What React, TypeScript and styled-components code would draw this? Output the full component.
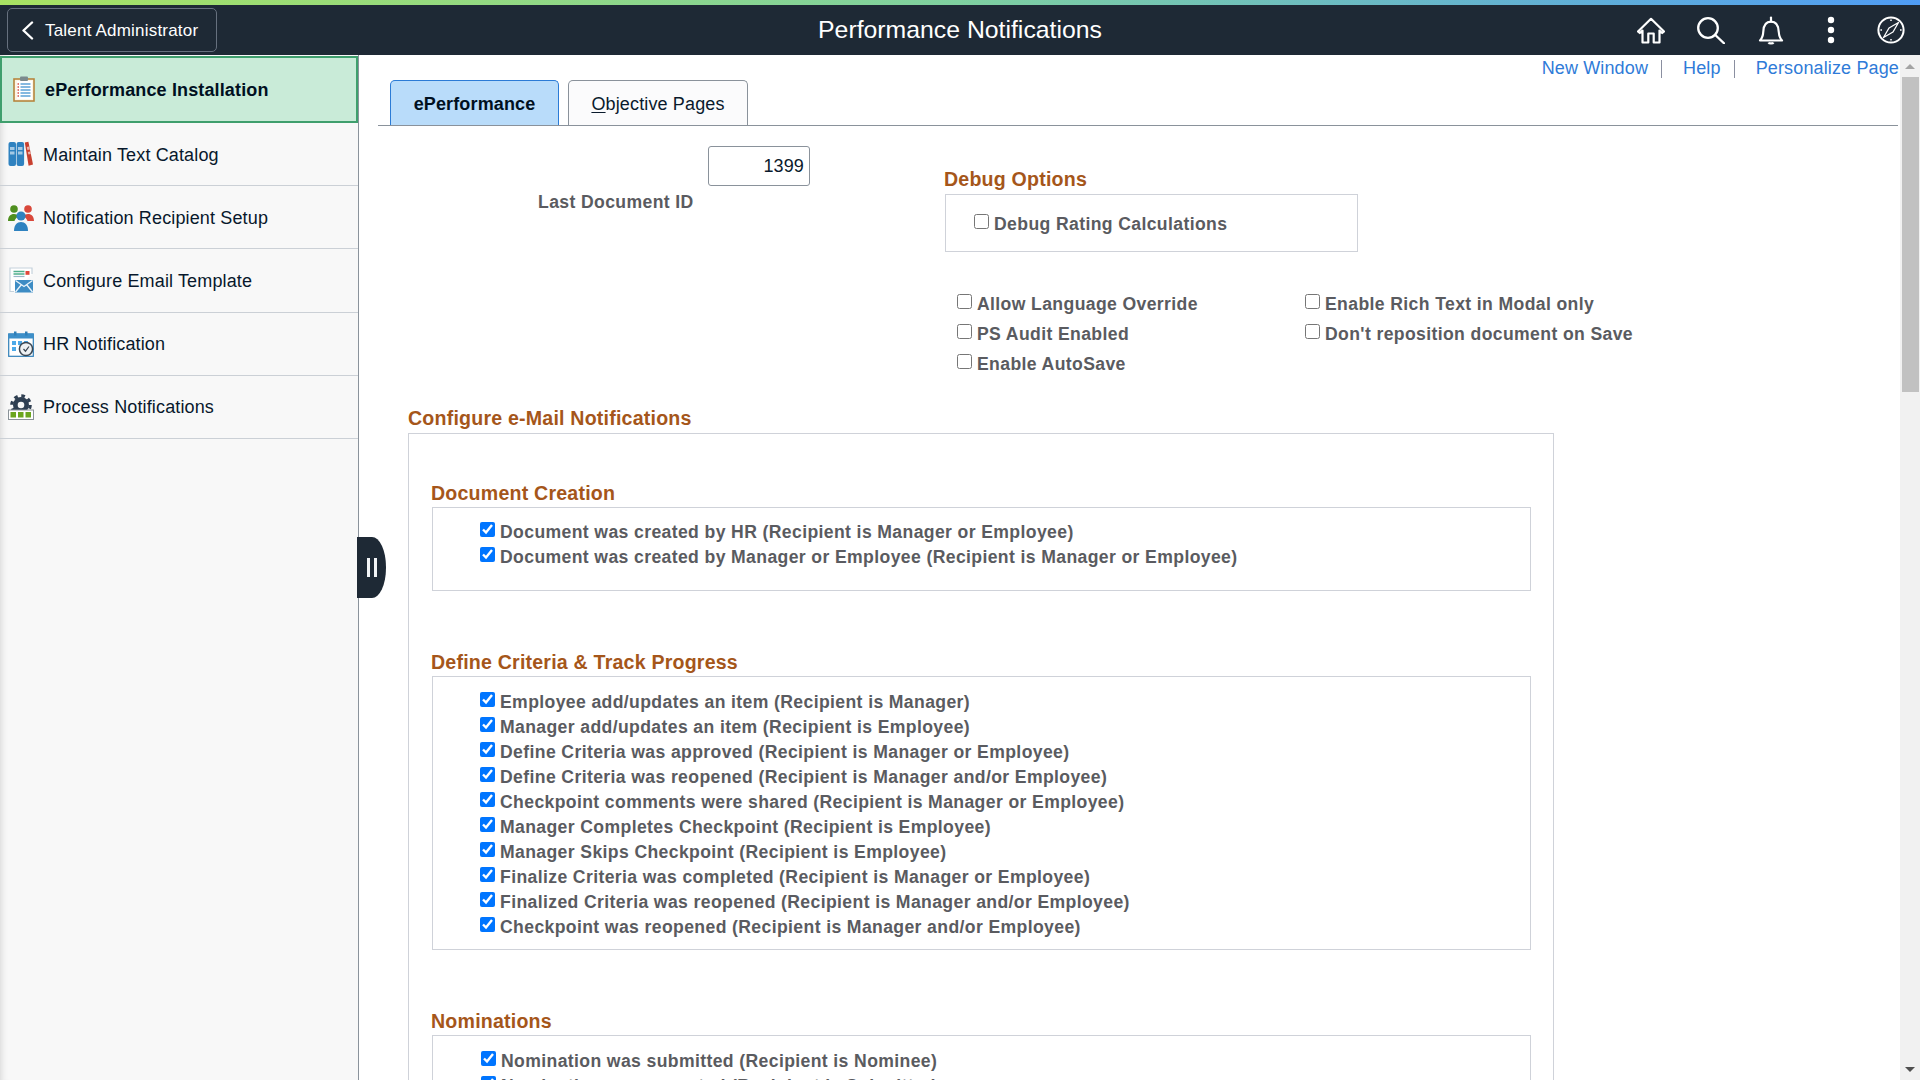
import React from 'react';
import styled, { createGlobalStyle } from 'styled-components';

const GlobalStyle = createGlobalStyle`
  html, body {
    margin: 0;
    height: 100%;
    overflow: hidden;
    background: #fff;
    font-family: "Liberation Sans", Arial, sans-serif;
  }
`;

const Page = styled.div`
  display: flex;
  flex-direction: column;
  height: 100vh;
  overflow: hidden;
`;

const Stripe = styled.div`
  height: 5px;
  flex-shrink: 0;
  background: linear-gradient(90deg, #a8e263 0%, #7fd0a0 50%, #4f9cf5 100%);
`;

const Banner = styled.header`
  display: grid;
  grid-template-columns: 1fr auto 1fr;
  align-items: center;
  height: 50px;
  flex-shrink: 0;
  background: #1e2935;
  color: #fff;
`;

const BackButton = styled.button`
  display: flex;
  align-items: center;
  justify-self: start;
  width: 210px;
  height: 44px;
  margin-left: 7px;
  padding: 2px 0 0 13px;
  gap: 11px;
  background: transparent;
  border: 1px solid #66707e;
  border-radius: 5px;
  color: #fff;
  font: 17px "Liberation Sans", Arial, sans-serif;
  letter-spacing: 0.2px;

  svg {
    margin-top: -2px;
  }
`;

const Title = styled.div`
  font-size: 24.8px;
`;

const BannerIcons = styled.div`
  display: flex;
  justify-self: end;
  align-items: center;
  gap: 32px;
  padding-right: 15px;
`;

const Body = styled.div`
  display: flex;
  flex: 1;
  min-height: 0;
  position: relative;
`;

const Sidebar = styled.nav`
  width: 358px;
  flex-shrink: 0;
  padding-top: 1px;
  background: #f8f8f8;
  border-right: 1px solid #8b939c;
  box-shadow: inset 9px 0 9px -9px rgba(0, 0, 0, 0.18);
`;

const NavItem = styled.div<{ $selected?: boolean }>`
  display: flex;
  align-items: center;
  box-sizing: border-box;
  height: ${(p) => (p.$selected ? '67px' : '63.2px')};
  padding: ${(p) => (p.$selected ? '2px 0 0 9px' : '2px 0 0 8px')};
  gap: ${(p) => (p.$selected ? '8px' : '9px')};
  font-size: 18px;
  letter-spacing: 0.14px;
  font-weight: ${(p) => (p.$selected ? 700 : 400)};
  color: ${(p) => (p.$selected ? '#00101f' : '#08182c')};
  background: ${(p) => (p.$selected ? '#c9ebd8' : 'transparent')};
  border: ${(p) => (p.$selected ? '2px solid #3f9f6d' : 'none')};
  border-bottom: ${(p) =>
    p.$selected ? '2px solid #3f9f6d' : '1px solid #cbd0d6'};
`;

const IconSlot = styled.span`
  display: flex;
  align-items: center;
  justify-content: center;
  width: 26px;
  flex-shrink: 0;
  margin-top: -2px;
`;

const Handle = styled.div`
  position: absolute;
  left: 357px;
  top: 482px;
  width: 29px;
  height: 61px;
  display: flex;
  align-items: center;
  justify-content: center;
  gap: 4px;
  background: #1e2935;
  border-radius: 0 14px 14px 0 / 0 30px 30px 0;
`;

const HandleBar = styled.span`
  width: 3px;
  height: 19px;
  background: #f2f4f6;
`;

const Content = styled.main`
  flex: 1;
  min-width: 0;
  overflow: hidden;
`;

const Links = styled.div`
  display: flex;
  justify-content: flex-end;
  align-items: center;
  box-sizing: border-box;
  height: 25px;
  padding: 2px 1px 0 0;
  font-size: 18px;
  letter-spacing: 0.14px;
  color: #2f7bd8;
`;

const LinkText = styled.a`
  color: #2f7bd8;
`;

const LinkDivider = styled.span`
  width: 1px;
  height: 18px;
  margin: 0 21px 0 13px;
  background: #8a8fa0;
`;

const TabStrip = styled.div`
  display: flex;
  gap: 9px;
  height: 45px;
  margin: 0 2px 0 19px;
  padding-left: 12px;
  border-bottom: 1px solid #8a929b;
`;

const Tab = styled.div<{ $active?: boolean }>`
  display: flex;
  align-items: center;
  justify-content: center;
  box-sizing: border-box;
  width: ${(p) => (p.$active ? '169px' : '180px')};
  height: 45px;
  padding-top: 2px;
  font-size: 18px;
  letter-spacing: 0.14px;
  font-weight: ${(p) => (p.$active ? 700 : 400)};
  color: ${(p) => (p.$active ? '#00101f' : '#0a1a2c')};
  background: ${(p) => (p.$active ? '#b9dcfa' : '#fbfbfc')};
  border: 1px solid ${(p) => (p.$active ? '#2b7bd6' : '#8a929b')};
  border-bottom: none;
  border-radius: 5px 5px 0 0;

  u {
    text-underline-offset: 2px;
  }
`;

const TopForm = styled.div`
  display: flex;
`;

const DocColumn = styled.div`
  width: 586px;
  flex-shrink: 0;
  box-sizing: border-box;
  padding: 20px 0 0 179px;
`;

const DocInput = styled.input`
  display: block;
  box-sizing: border-box;
  width: 102px;
  height: 40px;
  margin-left: 170px;
  padding: 0 5px 0 0;
  text-align: right;
  font: 18px "Liberation Sans", Arial, sans-serif;
  letter-spacing: 0.14px;
  color: #0a1a2c;
  background: #fff;
  border: 1px solid #8a929b;
  border-radius: 3px;
  outline: none;
`;

const FieldLabel = styled.label`
  display: block;
  margin-top: 6px;
  line-height: 20px;
  font-size: 17.6px;
  letter-spacing: 0.38px;
  font-weight: 700;
  color: #5a5b60;
`;

const DebugColumn = styled.div`
  padding-top: 42px;
`;

const Heading = styled.h2`
  margin: 0 0 5px -1px;
  padding-top: 1px;
  line-height: 20px;
  font-size: 19.6px;
  letter-spacing: 0.2px;
  font-weight: 700;
  color: #a5561a;
`;

const DebugBox = styled.div`
  display: flex;
  align-items: center;
  box-sizing: border-box;
  width: 413px;
  height: 58px;
  padding-left: 28px;
  border: 1px solid #cfd2d9;
`;

const OptionGrid = styled.div`
  display: grid;
  grid-template-columns: 348px auto;
  grid-auto-rows: 30px;
  margin: 36px 0 0 12px;
`;

const Check = styled.label<{ $indent?: number }>`
  display: flex;
  align-items: center;
  gap: 5px;
  box-sizing: border-box;
  height: 100%;
  padding: 2px 0 0 ${(p) => p.$indent ?? 0}px;
  font-size: 17.6px;
  letter-spacing: 0.38px;
  font-weight: 700;
  color: #5a5b60;
  white-space: nowrap;

  input {
    width: 15px;
    height: 15px;
    margin: 0 0 5px;
    flex-shrink: 0;
  }
`;

const NoticeCheck = styled(Check)`
  input {
    margin-bottom: 7px;
  }
`;

const CheckRow = styled.div`
  height: 25px;
`;

const NotifyArea = styled.section`
  margin: 29px 0 0 49px;
`;

const NotifyHeading = styled(Heading)`
  margin-left: 0;
`;

const OuterBox = styled.div`
  box-sizing: border-box;
  width: 1146px;
  padding: 48px 22px 0 23px;
  border: 1px solid #cfd2d9;
`;

const Group = styled.div`
  margin-bottom: 60px;
`;

const GroupHeading = styled(Heading)`
  margin-bottom: 4px;
`;

const GroupBox = styled.div<{ $top: number; $extra: number }>`
  padding: ${(p) => p.$top}px 0 ${(p) => p.$extra}px;
  border: 1px solid #cfd2d9;
`;

const Scrollbar = styled.div`
  display: flex;
  flex-direction: column;
  align-items: center;
  width: 20px;
  flex-shrink: 0;
  background: #f1f1f1;
`;

const ScrollArrow = styled.div<{ $down?: boolean }>`
  height: 22px;
  flex-shrink: 0;
  display: flex;
  align-items: center;
  justify-content: center;

  &::before {
    content: '';
    border-left: 5px solid transparent;
    border-right: 5px solid transparent;
    ${(p) =>
      p.$down
        ? 'border-top: 5px solid #505050;'
        : 'border-bottom: 5px solid #a3a3a3;'}
  }
`;

const ScrollThumb = styled.div`
  width: 17px;
  height: 315px;
  background: #c1c1c1;
`;

const ScrollFill = styled.div`
  flex: 1;
`;

const HomeIcon = () => (
  <svg width="28" height="27" viewBox="0 0 28 27" fill="none" stroke="#fff" strokeWidth="2.2" strokeLinejoin="round">
    <path d="M1 14.5 14 1.8l13 12.7-1.8 1.5L22.5 13.6V25.5h-5.800v-9h-5.400v9H5.500V13.600L2.800 16z" />
  </svg>
);

const SearchIcon = () => (
  <svg width="28" height="27" viewBox="0 0 28 27" fill="none" stroke="#fff" strokeWidth="2.3" strokeLinecap="round">
    <circle cx="11" cy="11" r="9.800" />
    <path d="M18.300 18 27 26.300" />
  </svg>
);

const BellIcon = () => (
  <svg width="28" height="29" viewBox="0 0 28 29" fill="none" stroke="#fff" strokeWidth="2.2" strokeLinejoin="round">
    <path d="M3 24.500c2.400-2.400 3.100-5 3.300-9C6.600 9 9 5.600 14 5.600s7.400 3.400 7.700 9.900c.2 4 .9 6.600 3.300 9z" />
    <path d="M14 5.600V1.600" strokeLinecap="round" />
    <path d="M11.600 26.400c.6 1.300 4.200 1.300 4.800 0" strokeWidth="2.400" />
  </svg>
);

const DotsIcon = () => (
  <svg width="28" height="28" viewBox="0 0 28 28" fill="#fff">
    <circle cx="14" cy="4" r="3.200" />
    <circle cx="14" cy="14" r="3.200" />
    <circle cx="14" cy="24" r="3.200" />
  </svg>
);

const CompassIcon = () => (
  <svg width="28" height="28" viewBox="0 0 28 28" fill="none" stroke="#fff" strokeWidth="2">
    <circle cx="14" cy="14" r="12.600" />
    <path d="M21.500 6.500 16 16 6.500 21.500 12 12z" strokeWidth="1.300" strokeLinejoin="round" />
    <path d="M14 3.400v1.600M14 23v1.600M3.400 14H5M23 14h1.600" strokeWidth="1.500" />
  </svg>
);

const ClipboardIcon = () => (
  <svg width="22" height="27" viewBox="0 0 22 27">
    <rect x="1" y="3" width="20" height="22" fill="#fdf6e8" stroke="#b6853d" strokeWidth="1.600" />
    <rect x="4" y="5" width="15" height="18" fill="#fff" />
    <rect x="7" y="0.500" width="8" height="4.500" rx="1" fill="#7b8a8d" />
    <path d="M7.500 8h10M7.500 11h10M7.500 14h10M7.500 17h10M7.500 20h10" stroke="#5ea3d6" strokeWidth="1.400" />
    <path d="M4.500 8H6M4.500 11H6M4.500 14H6M4.500 17H6M4.500 20H6" stroke="#d9534a" strokeWidth="1.400" />
  </svg>
);

const BooksIcon = () => (
  <svg width="26" height="26" viewBox="0 0 26 26">
    <rect x="0.500" y="1" width="7.500" height="24" rx="2" fill="#2f82c0" />
    <rect x="8.600" y="1" width="7.500" height="24" rx="2" fill="#2f82c0" />
    <path d="M2 6h4.500v3H2zM2 10.500h4.500v3H2zM10 6h4.500v3H10zM10 10.500h4.500v3H10z" fill="#a5c9e4" />
    <path d="M16.800 1.600 20.400.8 25 23.600l-4.400 1.200z" fill="#c8402f" />
    <path d="M18.800 6l2.500-.6.6 3-2.500.6zM19.800 11l2.500-.6.5 2.600-2.400.6z" fill="#e9b4ab" />
  </svg>
);

const PeopleIcon = () => (
  <svg width="26" height="27" viewBox="0 0 26 27">
    <circle cx="6" cy="5" r="3.800" fill="#4f8f1f" />
    <path d="M0 17c0-4.500 2.500-7 6-7 2 0 3.500.8 4.500 2.200C8.500 13.500 7 15 6.500 17z" fill="#4f8f1f" />
    <circle cx="20" cy="5" r="3.800" fill="#d9483b" />
    <path d="M26 17c0-4.500-2.500-7-6-7-2 0-3.500.8-4.500 2.200 2 1.300 3.500 2.800 4 4.800z" fill="#d9483b" />
    <circle cx="13" cy="12" r="4.600" fill="#2f82c0" />
    <path d="M6 27c0-6 3-9 7-9s7 3 7 9z" fill="#2f82c0" />
  </svg>
);

const TemplateIcon = () => (
  <svg width="25" height="26" viewBox="0 0 25 26">
    <path d="M5 24.500H1V1h22v6" fill="#fff" stroke="#c5d2dc" strokeWidth="1.200" />
    <path d="M4.500 4.500h11M4.500 7h11" stroke="#4fae8c" strokeWidth="1.300" />
    <path d="M4.500 9.500h11" stroke="#9bb7c9" strokeWidth="1.200" />
    <rect x="16.500" y="4" width="4" height="3.800" fill="#e0473a" />
    <rect x="6" y="13" width="18" height="12.500" fill="#3d8cc4" />
    <path d="M6.500 13.500 15 19.500l8.500-6M6.500 25l6-7.500M23.500 25l-6-7.500" stroke="#e8f3fa" strokeWidth="1.300" fill="none" />
  </svg>
);

const CalendarIcon = () => (
  <svg width="26" height="26" viewBox="0 0 26 26">
    <rect x="0.700" y="3" width="24.600" height="22.300" fill="#fff" stroke="#2f7fb8" strokeWidth="1.200" />
    <rect x="0.500" y="2.500" width="25" height="5" fill="#3d8fc9" />
    <rect x="6" y="0.500" width="2.500" height="4" fill="#2f7fb8" />
    <rect x="17" y="0.500" width="2.500" height="4" fill="#2f7fb8" />
    <path d="M4 10h4v4H4zM10 10h4v4h-4zM16 10h4v4h-4zM4 16h4v4H4z" fill="#4da9e8" />
    <circle cx="18" cy="18" r="6.600" fill="#eef1f3" stroke="#3a4652" strokeWidth="1.500" />
    <path d="M15.500 18 17.500 20.200 21 15.500" fill="none" stroke="#3a4652" strokeWidth="1.200" />
  </svg>
);

const GearIcon = () => (
  <svg width="26" height="26" viewBox="0 0 26 26">
    <circle cx="13" cy="11" r="8" fill="#2f3f52" />
    <circle cx="13" cy="11" r="9.200" fill="none" stroke="#2f3f52" strokeWidth="3.200" strokeDasharray="3.600 3.630" />
    <circle cx="13" cy="11" r="3.300" fill="#f8f8f8" />
    <rect x="0.500" y="16" width="25" height="9.500" fill="#fff" stroke="#8a9298" strokeWidth="1" />
    <path d="M2.500 18H8v5.500H2.500zM10 18h5.500v5.500H10zM17.500 18H23v5.500h-5.500z" fill="#6aa51e" />
  </svg>
);

const BackChevron = () => (
  <svg width="13" height="19" viewBox="0 0 13 19" fill="none" stroke="#fff" strokeWidth="2.400" strokeLinecap="round" strokeLinejoin="round">
    <path d="M11 1.500 2.500 9.500l8.500 8" />
  </svg>
);

const navItems = [
  { label: 'Maintain Text Catalog', Icon: BooksIcon },
  { label: 'Notification Recipient Setup', Icon: PeopleIcon },
  { label: 'Configure Email Template', Icon: TemplateIcon },
  { label: 'HR Notification', Icon: CalendarIcon },
  { label: 'Process Notifications', Icon: GearIcon },
];

const groups = [
  {
    title: 'Document Creation',
    top: 11,
    extra: 21,
    indent: 47,
    rows: [
      'Document was created by HR (Recipient is Manager or Employee)',
      'Document was created by Manager or Employee (Recipient is Manager or Employee)',
    ],
  },
  {
    title: 'Define Criteria & Track Progress',
    top: 12,
    extra: 10,
    indent: 47,
    rows: [
      'Employee add/updates an item (Recipient is Manager)',
      'Manager add/updates an item (Recipient is Employee)',
      'Define Criteria was approved (Recipient is Manager or Employee)',
      'Define Criteria was reopened (Recipient is Manager and/or Employee)',
      'Checkpoint comments were shared (Recipient is Manager or Employee)',
      'Manager Completes Checkpoint (Recipient is Employee)',
      'Manager Skips Checkpoint (Recipient is Employee)',
      'Finalize Criteria was completed (Recipient is Manager or Employee)',
      'Finalized Criteria was reopened (Recipient is Manager and/or Employee)',
      'Checkpoint was reopened (Recipient is Manager and/or Employee)',
    ],
  },
  {
    title: 'Nominations',
    top: 12,
    extra: 10,
    indent: 48,
    rows: [
      'Nomination was submitted (Recipient is Nominee)',
      'Nomination was accepted (Recipient is Submitter)',
    ],
  },
];

const App = () => (
  <Page>
    <GlobalStyle />
    <Stripe />
    <Banner>
      <BackButton>
        <BackChevron />
        Talent Administrator
      </BackButton>
      <Title>Performance Notifications</Title>
      <BannerIcons>
        <HomeIcon />
        <SearchIcon />
        <BellIcon />
        <DotsIcon />
        <CompassIcon />
      </BannerIcons>
    </Banner>
    <Body>
      <Sidebar>
        <NavItem $selected>
          <IconSlot>
            <ClipboardIcon />
          </IconSlot>
          ePerformance Installation
        </NavItem>
        {navItems.map(({ label, Icon }) => (
          <NavItem key={label}>
            <IconSlot>
              <Icon />
            </IconSlot>
            {label}
          </NavItem>
        ))}
      </Sidebar>
      <Handle>
        <HandleBar />
        <HandleBar />
      </Handle>
      <Content>
        <Links>
          <LinkText>New Window</LinkText>
          <LinkDivider />
          <LinkText>Help</LinkText>
          <LinkDivider />
          <LinkText>Personalize Page</LinkText>
        </Links>
        <TabStrip>
          <Tab $active>ePerformance</Tab>
          <Tab>
            <span>
              <u>O</u>bjective Pages
            </span>
          </Tab>
        </TabStrip>
        <TopForm>
          <DocColumn>
            <DocInput defaultValue="1399" />
            <FieldLabel>Last Document ID</FieldLabel>
          </DocColumn>
          <DebugColumn>
            <Heading>Debug Options</Heading>
            <DebugBox>
              <Check>
                <input type="checkbox" />
                Debug Rating Calculations
              </Check>
            </DebugBox>
            <OptionGrid>
              <Check>
                <input type="checkbox" />
                Allow Language Override
              </Check>
              <Check>
                <input type="checkbox" />
                Enable Rich Text in Modal only
              </Check>
              <Check>
                <input type="checkbox" />
                PS Audit Enabled
              </Check>
              <Check>
                <input type="checkbox" />
                Don't reposition document on Save
              </Check>
              <Check>
                <input type="checkbox" />
                Enable AutoSave
              </Check>
            </OptionGrid>
          </DebugColumn>
        </TopForm>
        <NotifyArea>
          <NotifyHeading>Configure e-Mail Notifications</NotifyHeading>
          <OuterBox>
            {groups.map((group) => (
              <Group key={group.title}>
                <GroupHeading>{group.title}</GroupHeading>
                <GroupBox $top={group.top} $extra={group.extra}>
                  {group.rows.map((row) => (
                    <CheckRow key={row}>
                      <NoticeCheck $indent={group.indent}>
                        <input type="checkbox" defaultChecked />
                        {row}
                      </NoticeCheck>
                    </CheckRow>
                  ))}
                </GroupBox>
              </Group>
            ))}
          </OuterBox>
        </NotifyArea>
      </Content>
      <Scrollbar>
        <ScrollArrow />
        <ScrollThumb />
        <ScrollFill />
        <ScrollArrow $down />
      </Scrollbar>
    </Body>
  </Page>
);

export default App;
